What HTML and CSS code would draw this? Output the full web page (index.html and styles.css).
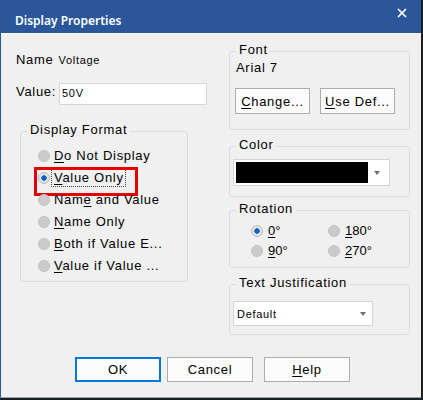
FILE: index.html
```html
<!DOCTYPE html>
<html>
<head>
<meta charset="utf-8">
<link rel="stylesheet" href="styles.css">
</head>
<body>
<div class="window">
  <div class="titlebar">
    <span class="title">Display Properties</span>
    <svg class="close" width="10" height="10" viewBox="0 0 10 10"><path d="M1 1L9 9M9 1L1 9" stroke="#fff" stroke-width="1.7" fill="none"/></svg>
  </div>
  <div class="client">
    <div class="columns">
      <div class="left">
        <div class="name-row"><span class="lbl">Name</span><span class="small name-val">Voltage</span></div>
        <div class="value-row"><span class="lbl value-lbl">Value:</span><div class="edit small">50V</div></div>
        <div class="group format">
          <div class="group-title">Display Format</div>
          <div class="radio-row"><span class="radio"></span><span class="rlabel"><u>D</u>o Not Display</span></div>
          <div class="radio-row selected"><span class="radio on"></span><span class="rlabel focus"><u>V</u>alue Only</span></div>
          <div class="radio-row"><span class="radio"></span><span class="rlabel">Nam<u>e</u> and Value</span></div>
          <div class="radio-row"><span class="radio"></span><span class="rlabel"><u>N</u>ame Only</span></div>
          <div class="radio-row"><span class="radio"></span><span class="rlabel"><u>B</u>oth if Value E...</span></div>
          <div class="radio-row"><span class="radio"></span><span class="rlabel"><u>V</u>alue if Value ...</span></div>
        </div>
      </div>
      <div class="right">
        <div class="group font-group">
          <div class="group-title">Font</div>
          <div class="font-name">Arial 7</div>
          <div class="btn-row">
            <div class="btn small-btn"><u>C</u>hange...</div>
            <div class="btn small-btn"><u>U</u>se Def...</div>
          </div>
        </div>
        <div class="group color-group">
          <div class="group-title">Color</div>
          <div class="combo color-combo"><span class="swatch"></span><span class="arrow"></span></div>
        </div>
        <div class="group rotation-group">
          <div class="group-title">Rotation</div>
          <div class="rot-grid">
            <div class="rot-row"><span class="radio on"></span><span class="rlabel"><u>0</u>°</span></div>
            <div class="rot-row"><span class="radio"></span><span class="rlabel"><u>1</u>80°</span></div>
            <div class="rot-row"><span class="radio"></span><span class="rlabel"><u>9</u>0°</span></div>
            <div class="rot-row"><span class="radio"></span><span class="rlabel"><u>2</u>70°</span></div>
          </div>
        </div>
        <div class="group just-group">
          <div class="group-title">Text Justification</div>
          <div class="combo just-combo"><span class="small combo-text">Default</span><span class="arrow"></span></div>
        </div>
      </div>
    </div>
    <div class="footer">
      <div class="btn foot-btn default">OK</div>
      <div class="btn foot-btn cancel">Cancel</div>
      <div class="btn foot-btn help"><u>H</u>elp</div>
    </div>
  </div>
</div>
</body>
</html>
```
FILE: styles.css
```css
* { box-sizing: border-box; }

body {
  margin: 0;
  width: 423px;
  height: 400px;
  overflow: hidden;
  background: #1e1e1e;
  font-family: "Liberation Sans", Arial, sans-serif;
  font-size: 13px;
  letter-spacing: 0.7px;
  color: #000;
}

.window {
  width: 421px;
  height: 398px;
  background: #f0f0f0;
  border-left: 1px solid #2b579a;
  border-bottom: 1px solid #8aa7d4;
  display: flex;
  flex-direction: column;
}

.titlebar {
  height: 33px;
  flex: none;
  background: #2b579a;
  color: #fff;
  display: flex;
  align-items: flex-start;
}

.title {
  font-family: "Noto Sans", "Liberation Sans", sans-serif;
  font-weight: 600;
  font-size: 12px;
  letter-spacing: 0;
  line-height: 14px;
  padding-top: 14px;
  padding-left: 14px;
}

.close {
  margin-left: auto;
  margin-right: 14px;
  margin-top: 8px;
}

.client {
  flex: 1;
  border-top: 1px solid #fafafa;
  padding: 17px 0 0 15px;
}

.columns {
  display: flex;
  align-items: flex-start;
}

.left {
  width: 192px;
}

.right {
  width: 181px;
  margin-left: 21px;
}

.lbl {
  font-size: 13px;
  line-height: 16px;
}

.small {
  font-size: 11px;
}

.name-row {
  display: flex;
  align-items: baseline;
  height: 16px;
  line-height: 16px;
  margin-top: 1px;
}

.name-val {
  margin-left: 5px;
}

.value-row {
  display: flex;
  align-items: flex-start;
  margin-top: 15px;
}

.value-lbl {
  width: 43px;
  padding-top: 1px;
}

.edit {
  width: 148px;
  height: 22px;
  background: #fff;
  border: 1px solid #d6d6d6;
  line-height: 19px;
  padding-left: 2px;
}

.group {
  position: relative;
  border: 1px solid #dcdcdc;
  border-radius: 3px;
}

.group-title {
  position: absolute;
  top: -10px;
  left: 6px;
  padding: 0 3px;
  background: #f0f0f0;
  line-height: 16px;
  white-space: nowrap;
}

.format {
  margin-top: 26px;
  margin-left: 4px;
  width: 168px;
  padding: 13px 0 4px 17px;
}

.radio-row {
  position: relative;
  display: flex;
  align-items: center;
  height: 22px;
}

.radio {
  flex: none;
  width: 12px;
  height: 12px;
  border-radius: 50%;
  background: #cbcbcb;
  border: 1px solid #c2c2c2;
}

.radio.on {
  background: radial-gradient(circle, #0a5fc6 0, #0a5fc6 2.4px, #e2e2e2 3px);
  border-color: #bdbdbd;
}

.rlabel {
  margin-left: 4px;
  line-height: 16px;
  white-space: nowrap;
}

u {
  text-underline-offset: 2px;
}

.rlabel.focus {
  outline: 1px dotted #444;
  padding: 0 1px 0 2px;
  margin-left: 2px;
}

.radio-row.selected::after {
  content: "";
  position: absolute;
  left: -4px;
  top: 0;
  width: 98px;
  height: 23px;
  border: 3px solid #e60000;
}

.font-group {
  padding: 8px 0 15px 5px;
}

.font-name {
  line-height: 16px;
  margin-left: 1px;
}

.btn-row {
  display: flex;
  gap: 10px;
  margin-top: 12px;
}

.btn {
  background: #fbfbfb;
  border: 1px solid #adadad;
  display: flex;
  align-items: center;
  justify-content: center;
  white-space: nowrap;
}

.small-btn {
  width: 75px;
  height: 26px;
}

.color-group {
  margin-top: 16px;
  padding: 12px 0 10px 3px;
}

.combo {
  background: #fff;
  border: 1px solid #d4d4d4;
  display: flex;
  align-items: center;
}

.color-combo {
  width: 157px;
  height: 27px;
  padding: 2px;
}

.swatch {
  width: 132px;
  height: 21px;
  background: #000;
}

.arrow {
  margin-left: auto;
  width: 0;
  height: 0;
  border-left: 3.5px solid transparent;
  border-right: 3.5px solid transparent;
  border-top: 4px solid #707070;
}

.color-combo .arrow {
  margin-right: 7px;
}

.rotation-group {
  margin-top: 13px;
  padding: 10px 0 6px 21px;
}

.rot-grid {
  display: grid;
  grid-template-columns: 77px auto;
}

.rot-row {
  display: flex;
  align-items: center;
  height: 20px;
}

.rot-row .rlabel {
  margin-left: 5px;
  letter-spacing: 0;
}

.just-group {
  margin-top: 16px;
  padding: 16px 0 8px 3px;
}

.just-combo {
  width: 140px;
  height: 25px;
  padding-left: 3px;
}

.just-combo .arrow {
  margin-right: 6px;
}

.footer {
  display: flex;
  margin-top: 22px;
  margin-left: 59px;
}

.foot-btn {
  width: 86px;
  height: 25px;
}

.default {
  border-color: #0078d7;
  box-shadow: inset 0 0 0 1px #0078d7;
}

.cancel {
  margin-left: 6px;
}

.help {
  margin-left: 11px;
}
```
